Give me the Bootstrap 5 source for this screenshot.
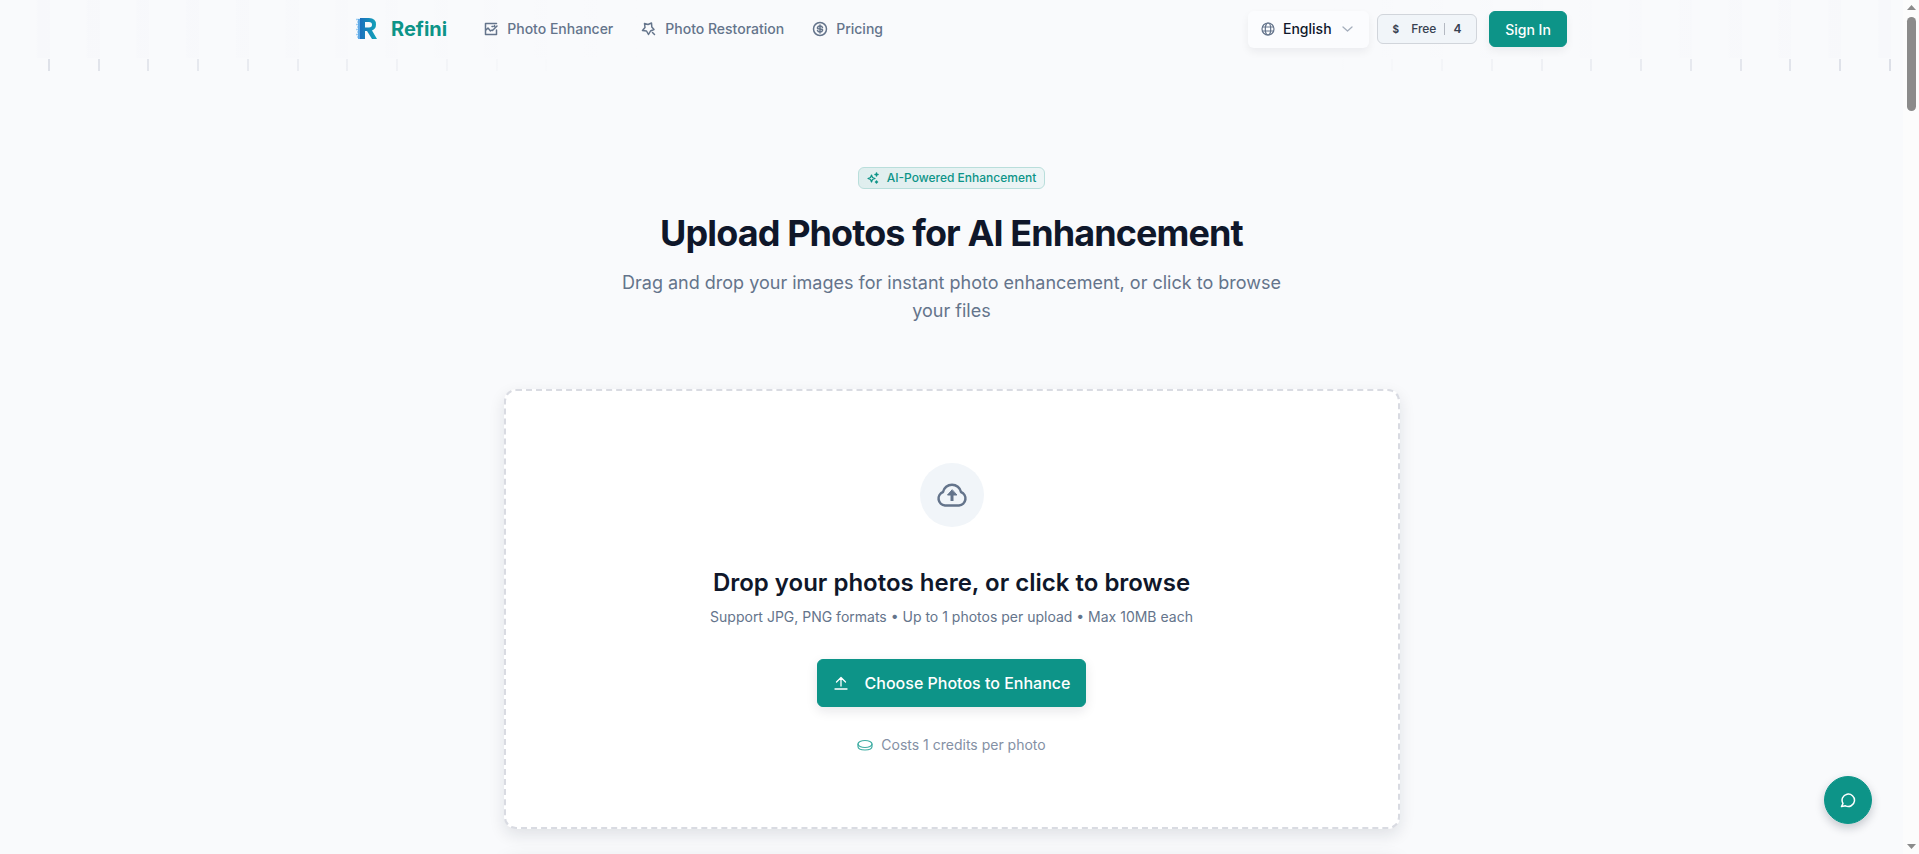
<!DOCTYPE html>
<html lang="en">
<head>
<meta charset="utf-8">
<meta name="viewport" content="width=device-width, initial-scale=1">
<title>Refini</title>
<link href="https://cdn.jsdelivr.net/npm/bootstrap@5.3.0/dist/css/bootstrap.min.css" rel="stylesheet">
<style>
:root { --teal:#0d9488; --slate:#64748b; --ink:#0f172a; }
body { font-family:Inter,"Liberation Sans",sans-serif; background:#f9fafc; color:var(--ink); font-size:14px; line-height:20px; }
.view { height:100vh; overflow:hidden; }
.page-col { min-width:0; overflow:hidden; }
.topbar { height:58px; background:
  linear-gradient(90deg,transparent 0,#f9fafc 34%,#f9fafc 70%,transparent),
  repeating-linear-gradient(90deg,#f9fafc 0 1.9%,#f7f8fb 2% 2.615%); }
.top-inner { max-width:1231px; }
.brand { color:var(--teal); font-size:20px; font-weight:700; line-height:28px; }
.menu { margin-left:36px; }
.menu a { color:var(--slate); font-weight:500; }
.lang { width:121px; height:37px; background:#fbfcfe; border:0; border-radius:6px; font-weight:500; color:var(--ink); box-shadow:0 4px 8px rgba(15,23,42,.06); }
.credits { width:100px; height:30px; border:1px solid #d1d5db; border-radius:6px; background:#f1f5f9; font-size:12px; font-weight:500; color:#374151; }
.credits i { width:1px; height:12px; background:#b4b9c2; }
.coin { font-size:10px; font-weight:700; }
.btn-teal { --bs-btn-bg:var(--teal); --bs-btn-color:#fff; --bs-btn-border-color:var(--teal); --bs-btn-hover-bg:#0f766e; --bs-btn-hover-color:#fff; --bs-btn-border-radius:6px; --bs-btn-font-weight:500; }
.signin { width:78px; height:36px; font-size:14px; box-shadow:0 4px 8px rgba(15,23,42,.06); }
.ruler { height:12px; margin-top:1px; background:
  linear-gradient(90deg,transparent 0,#f9fafc 30%,#f9fafc 70%,transparent),
  repeating-linear-gradient(90deg,transparent 0 2.51%,#dcdfe7 2.51% 2.615%); }
.intro { padding-top:96px; }
.tagline { height:22px; border:1px solid #b9dedb; border-radius:6px; background:linear-gradient(90deg,#dfeeee,#edf5f6); color:var(--teal); font-size:12px; line-height:16px; font-weight:500; }
.title { font-size:36px; line-height:40px; font-weight:700; letter-spacing:-0.025em; margin-top:24px; }
.subtitle { font-size:18px; line-height:28px; color:var(--slate); max-width:672px; margin-top:16px; }
.column { max-width:896px; margin-top:64px; }
.drop { height:440px; background:#fff; border:2px dashed #d9dbe2; border-radius:12px; box-shadow:0 6px 16px rgba(15,23,42,.11); padding-top:72px; }
.cloud { width:64px; height:64px; background:#f1f5f9; color:var(--slate); }
.drop h2 { font-size:24px; line-height:32px; font-weight:600; margin:40px 0 8px; }
.drop p { color:var(--slate); }
.choose { width:269px; height:48px; font-size:16px; margin-top:32px; box-shadow:0 4px 12px rgba(15,23,42,.1); }
.cost { margin-top:28px; color:#8490a4; }
.next-panel { height:200px; margin-top:32px; background:#fff; border-radius:12px; box-shadow:0 0 20px rgba(15,23,42,.1); }
.chat { right:47px; bottom:30px; width:48px; height:48px; box-shadow:0 4px 10px rgba(15,23,42,.22); }
.scroller { width:16px; background:#fcfcfc; padding:5px 0 5px 1px; }
.thumb { width:9px; height:94px; border-radius:5px; background:#8b8b8b; margin-top:7px; }
svg { display:block; flex:none; fill:none; stroke:currentColor; stroke-linecap:round; stroke-linejoin:round; stroke-width:1.5; }
.globe { color:var(--slate); margin-left:-4px; }
.caret { color:#a4aebc; }
.credit-icon { color:#3fada3; }
</style>
</head>
<body>
<div class="view d-flex">
<div class="page-col flex-grow-1">
  <header class="topbar d-flex align-items-center">
    <div class="top-inner w-100 mx-auto d-flex align-items-center">
      <a href="#" class="brand d-flex align-items-center ms-3 text-decoration-none">
        <svg class="me-2" width="31" height="32" viewBox="0 0 31 32">
          <defs><linearGradient id="rg"><stop offset="0" stop-color="#1c6fbd"/><stop offset="1" stop-color="#12a5b8"/></linearGradient></defs>
          <path d="M4 6.500h5M5 9h4M4 11.500h5M5 14h4M4 16.500h5M5 19h5M4 21.500h5M5 24h5" stroke="#9bcdf2" stroke-linecap="butt"/>
          <path d="M6 6h4v20H6z" fill="#5fa9e6" stroke="none"/>
          <path fill="url(#rg)" stroke="none" fill-rule="evenodd" d="M8 5h9q7 0 7 6.500 0 4.500-4 6l5 8.500h-5l-5-8h-2v8H8zM13 9v5.500h4q3 0 3-2.700T17 9z"/>
        </svg>Refini</a>
      <nav class="menu d-flex align-items-center">
        <a href="#" class="d-flex align-items-center gap-2 text-decoration-none me-4">
          <svg width="16" height="16" viewBox="0 0 16 16"><path d="M13.500 9v4.500h-11v-11h11M2.500 9.500 5 7l2.500 3 1.500-1M9.500 9.500 14 5M9 5.500h1M11.500 4.500v1"/></svg>Photo Enhancer</a>
        <a href="#" class="d-flex align-items-center gap-2 text-decoration-none ms-1 me-4">
          <svg width="16" height="16" viewBox="0 0 16 16"><path d="M3.500 2.500 7 3.500 10.500 2l.3 4L13 8.500l-3.500 1.500-2 3.500L5.500 10l-4-.5L4 6.500zM11.500 11.500 13.500 13.500"/></svg>Photo Restoration</a>
        <a href="#" class="d-flex align-items-center gap-2 text-decoration-none ms-1">
          <svg width="16" height="16" viewBox="0 0 16 16"><circle cx="8" cy="8" r="6.500"/><path d="M10.500 6.500Q10 5 8 5T5.500 6.500 8 8t2.500 1.500T8 11t-2.500-1.500M8 4v8"/></svg>Pricing</a>
      </nav>
      <div class="ms-auto d-flex align-items-center">
        <button type="button" class="lang d-flex align-items-center px-3 me-2">
          <svg class="me-2 globe" width="15" height="14" viewBox="0 0 15 14"><g stroke-width="1.200"><circle cx="8" cy="7" r="6"/><ellipse cx="8" cy="7" rx="2.700" ry="6"/><path d="M2.500 5h11M2.500 9h11"/></g></svg>English
          <svg class="ms-auto caret" width="11" height="8" viewBox="0 0 11 8"><path d="m1 2 4.500 4L10 2" stroke-width="1.300"/></svg>
        </button>
        <div class="credits d-flex align-items-center justify-content-center gap-2 me-2"><span class="coin me-1">$</span><span>Free</span><i></i><span class="fw-semibold">4</span></div>
        <button type="button" class="btn btn-teal signin p-0 ms-1">Sign In</button>
      </div>
    </div>
  </header>
  <div class="ruler"></div>
  <main>
    <section class="intro text-center d-flex flex-column align-items-center">
      <span class="tagline d-inline-flex align-items-center px-2">
        <svg width="12" height="12" viewBox="0 0 12 12" class="me-2"><path d="m4.500 3 1 2.500L8 6.500l-2.500 1-1 2.500-1-2.500-2.500-1 2.500-1z" stroke-width="1.200"/><path d="M9.500 1v3M8 2.500h3M9.500 9v2M8.500 10h2"/></svg>AI-Powered Enhancement</span>
      <h1 class="title mb-0">Upload Photos for AI Enhancement</h1>
      <p class="subtitle mb-0">Drag and drop your images for instant photo enhancement, or click to browse your files</p>
    </section>
    <div class="column mx-auto">
      <section class="drop d-flex flex-column align-items-center text-center">
        <div class="cloud rounded-circle d-flex align-items-center justify-content-center">
          <svg width="32" height="32" viewBox="0 0 32 32"><path stroke-width="2.500" d="M9 26.500a7 7 0 0 1-2-13.500 9.200 9.200 0 0 1 18 0 7 7 0 0 1-2 13.500z"/><path stroke-width="3" stroke-linecap="butt" d="M16 22v-7"/><path fill="currentColor" stroke-width="1" d="m16 11-4.500 5h9z"/></svg>
        </div>
        <h2>Drop your photos here, or click to browse</h2>
        <p class="mb-0">Support JPG, PNG formats • Up to 1 photos per upload • Max 10MB each</p>
        <button type="button" class="btn btn-teal choose d-flex align-items-center justify-content-center gap-3 p-0">
          <svg width="16" height="16" viewBox="0 0 16 16"><path d="M2 14h12M8 11V2.500M3.500 7 8 2.500 12.500 7" stroke-width="1.300"/></svg>Choose Photos to Enhance</button>
        <div class="cost d-flex align-items-center gap-2">
          <svg class="credit-icon" width="16" height="16" viewBox="0 0 16 16"><g stroke-width="1.200"><ellipse cx="8" cy="7" rx="7" ry="3.500"/><path d="M1 7v2.500C1 11.500 4 13 8 13s7-1.500 7-3.500V7"/></g></svg>Costs 1 credits per photo</div>
      </section>
      <section class="next-panel"></section>
    </div>
  </main>
  <div class="position-fixed chat rounded-circle"><button type="button" aria-label="Chat" class="btn btn-teal rounded-circle w-100 h-100 p-0 d-flex align-items-center justify-content-center">
    <svg width="16" height="16" viewBox="0 0 16 16"><path d="M3 11.500a6.200 6.200 0 1 1 2.500 2.300L1.500 14.500z"/></svg></button></div>
</div>
<div class="scroller d-flex flex-column align-items-center" aria-hidden="true">
  <svg width="9" height="5" viewBox="0 0 9 5"><path d="M0 5 4.500 0 9 5z" fill="#8b8b8b" stroke="none"/></svg>
  <div class="thumb"></div>
  <svg class="mt-auto" width="9" height="5" viewBox="0 0 9 5"><path d="M0 0 4.500 5 9 0z" fill="#8b8b8b" stroke="none"/></svg>
</div>
</div>
<script src="https://cdn.jsdelivr.net/npm/bootstrap@5.3.0/dist/js/bootstrap.bundle.min.js"></script>
</body>
</html>
